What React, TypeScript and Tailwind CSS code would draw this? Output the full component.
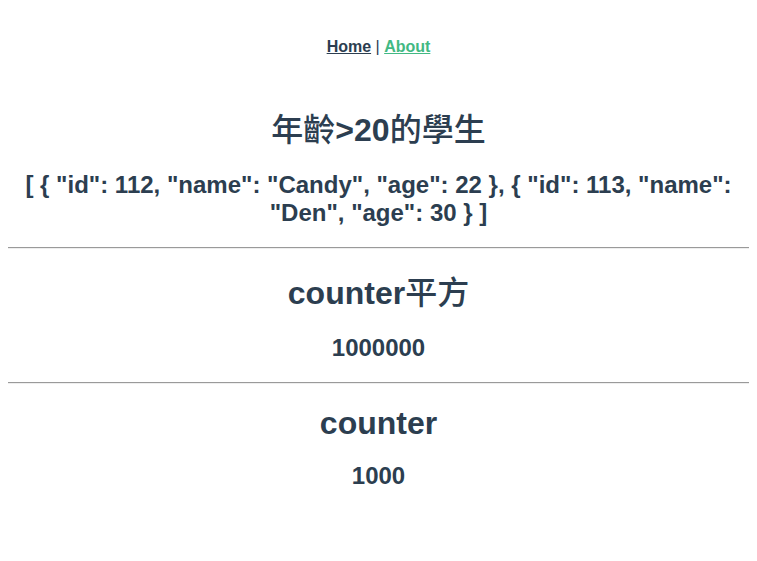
import React from "react";

const students = [
  { id: 112, name: "Candy", age: 22 },
  { id: 113, name: "Den", age: 30 },
];

function Hr() {
  return <div className="mx-0 h-[2px] border-t border-b border-t-[#9a9a9a] border-b-[#eeeeee]" />;
}

export default function App() {
  const json = "[ " + students.map((s) => `{ "id": ${s.id}, "name": "${s.name}", "age": ${s.age} }`).join(", ") + " ]";
  return (
    <div
      className="min-h-screen bg-white px-2 pt-2 text-center text-[#2c3e50]"
      style={{ fontFamily: '"Liberation Sans", Arial, "Noto Sans CJK TC", sans-serif' }}
    >
      <div className="p-[30px] text-[16px] leading-[18px]">
        <a href="#" className="font-bold text-[#2c3e50] underline">Home</a>
        <span> | </span>
        <a href="#" className="font-bold text-[#42b983] underline">About</a>
      </div>
      <h1 className="mt-[21px] text-[32px] font-bold leading-[46px]">
        <span className="font-medium">年齡</span>&gt;20<span className="font-medium">的學生</span>
      </h1>
      <h2 className="mt-[18px] text-[24px] font-bold leading-[28px]">{json}</h2>
      <div className="mt-[20px]">
        <Hr />
      </div>
      <h1 className="mt-[21px] text-[32px] font-bold leading-[46px]">
        counter<span className="font-medium">平方</span>
      </h1>
      <h2 className="mt-[18px] text-[24px] font-bold leading-[28px]">1000000</h2>
      <div className="mt-[20px]">
        <Hr />
      </div>
      <h1 className="mt-[21px] text-[32px] font-bold leading-[37px]">counter</h1>
      <h2 className="mt-[20px] text-[24px] font-bold leading-[28px]">1000</h2>
    </div>
  );
}
